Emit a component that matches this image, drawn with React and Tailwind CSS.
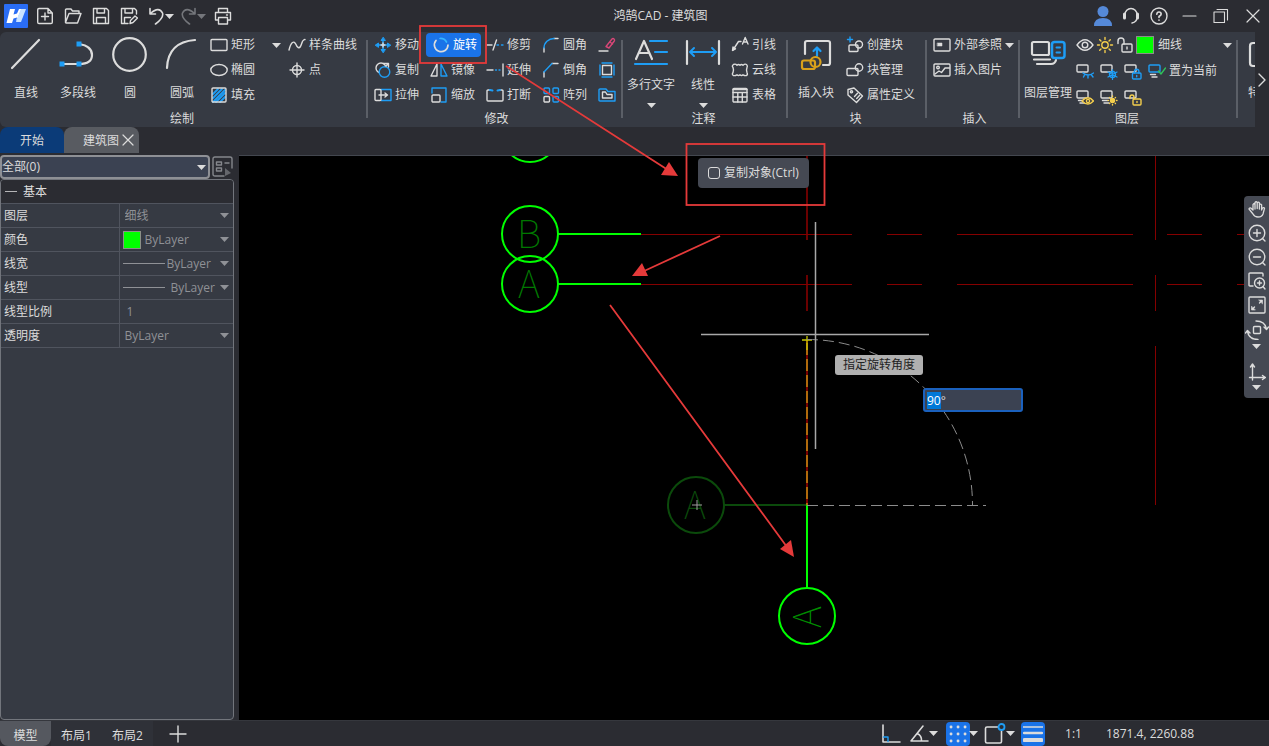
import React, { useEffect, useRef } from "react";

const W = "#dcdcdc";
const B = "#1e9df5";
const Y = "#f5cf4d";

/* ---------- small helpers ---------- */

function Svg({ w = 18, h = 18, children, className = "" }) {
  return (
    <svg width={w} height={h} viewBox={`0 0 ${w} ${h}`} fill="none" stroke={W} strokeWidth="1.4" strokeLinecap="round" strokeLinejoin="round" className={`shrink-0 ${className}`} aria-hidden="true">
      {children}
    </svg>
  );
}

function Caret({ className = "text-[#dcdcdc]" }) {
  return (
    <svg width="9" height="5" viewBox="0 0 9 5" fill="currentColor" className={`shrink-0 ${className}`} aria-hidden="true">
      <path d="M0 0h9L4.500 5z" />
    </svg>
  );
}

/* ---------- ribbon icons ---------- */

const icons = {
  rect: <Svg><rect x="1" y="3.500" width="16" height="11" rx="1" /></Svg>,
  ellipse: <Svg><ellipse cx="9" cy="9" rx="8.200" ry="5.500" /></Svg>,
  hatch: (
    <Svg>
      <path d="M3 8l5-5M3 12l9-9M3 16L15 4M6 16l9-9M10 16l5-5" stroke={B} strokeWidth="1.800" />
      <rect x="2" y="2" width="14" height="14" rx="1" />
    </Svg>
  ),
  spline: <Svg><path d="M1 14C3 6 6 4 8 8.500S12 13 13.500 8 16 4 17 3.500" /></Svg>,
  point: <Svg><circle cx="9" cy="9" r="4.500" /><path d="M9 2v14M2 9h14" /></Svg>,
  move: (
    <Svg>
      <path d="M9 3v12M3 9h12" stroke={B} strokeWidth="1.600" />
      <path d="M9 1.500L7 4.500h4zM9 16.500l-2-3h4zM1.500 9l3-2v4zM16.500 9l-3-2v4z" fill={B} stroke={B} strokeWidth="1" />
      <path d="M9 7v4M7 9h4" />
    </Svg>
  ),
  copy: (
    <Svg>
      <circle cx="7" cy="7" r="5" />
      <circle cx="10.500" cy="11" r="5.300" stroke={B} fill="#363a43" />
      <path d="M9 2.500h5.500V6M14.500 2.500L12 5" />
    </Svg>
  ),
  stretch: (
    <Svg>
      <path d="M7 3.500h10v11H7" stroke={B} />
      <rect x="1" y="3.500" width="6" height="11" rx="1" />
      <path d="M5 9h8M11 7l2.500 2-2.500 2" />
    </Svg>
  ),
  rotate: (
    <Svg>
      <path d="M4 4.500A6.800 6.800 0 1 0 16 9" strokeWidth="1.700" />
      <path d="M8 2.500A6.800 6.800 0 0 1 14.500 6" stroke="#35b4ff" strokeWidth="1.700" />
    </Svg>
  ),
  mirror: <Svg><path d="M7 3v12H1z" /><path d="M11 3v12h6z" stroke={B} /></Svg>,
  scale: (
    <Svg>
      <path d="M2 7V2h14v14h-5" stroke={B} />
      <rect x="2" y="9" width="8" height="7" rx="1" />
    </Svg>
  ),
  trim: <Svg><path d="M1 9h5M10.500 4L7 14" /><path d="M11 9h1.500M15.500 9H17" stroke={B} /></Svg>,
  extend: <Svg><path d="M1 9h6M17 3v12" /><path d="M9.500 9h1M13 9h1" stroke={B} /></Svg>,
  break: <Svg><path d="M4 4H2q-1 0-1 1v9q0 1 1 1h14q1 0 1-1V5q0-1-1-1h-2" /><path d="M4 4l2.500.500M14 4l-2.500.500" stroke={B} strokeWidth="2" /></Svg>,
  fillet: <Svg><path d="M2 16v-4M12 2.500h4" /><path d="M2 12A10 9.500 0 0 1 12 2.500" stroke={B} /></Svg>,
  chamfer: <Svg><path d="M2 16v-5M10 2.500h6" /><path d="M2 11l8-8.500" stroke={B} /></Svg>,
  array: (
    <Svg>
      <rect x="2" y="10.500" width="5.500" height="5.500" rx="1" />
      <g stroke={B}>
        <rect x="2" y="2" width="5.500" height="5.500" rx="1" />
        <rect x="11" y="2" width="5.500" height="5.500" rx="1" />
        <rect x="11" y="10.500" width="5.500" height="5.500" rx="1" />
      </g>
    </Svg>
  ),
  erase: (
    <Svg>
      <path d="M1 15h9" />
      <path d="M8 10.500l6-7.500q1-1 2 0t.300 2L11 12zM12 6l2.500 2" stroke="#d84677" />
    </Svg>
  ),
  explode: (
    <Svg>
      <rect x="4.500" y="4.500" width="9" height="9" />
      <path d="M4 2h10M4 16h10M2 4v10M16 4v10" stroke={B} />
    </Svg>
  ),
  offset: (
    <Svg>
      <path d="M2 3h6l2 2.500h7V15H2q-1 0-1-1V4q0-1 1-1z" stroke={B} />
      <path d="M4.500 6h3L9 8.500h5V12H4.500z" />
    </Svg>
  ),
  leader: (
    <Svg>
      <path d="M2 14l5.500-8.500H10" />
      <path d="M1.500 14.500L2 11l2.500 1.800z" fill={W} />
      <path d="M11.500 8l2.700-6.500L17 8M12.500 6H16" />
    </Svg>
  ),
  cloud: (
    <Svg>
      <path d="M2.500 3.500q2-1 3.500.700 1.500-1.500 3 0 1.500-1.500 3 0 2-1.700 3.500-.700 1.500 1.500.500 3-1 2.500 0 5 1 2-.500 3-1.500.500-3.500-.700-1.500 1.500-3 0-1.500 1.500-3 0-2 1.200-3.500.700Q.500 13.500 2 11.500q1-2.500 0-5Q.500 5 2.500 3.500z" />
    </Svg>
  ),
  table: <Svg><rect x="2" y="2.500" width="14" height="13.500" rx="1" /><path d="M2 6.500h14M2 11h14M6.800 6.500V16M11.300 6.500V16M2 3.500h14" /></Svg>,
  blockNew: (
    <Svg>
      <rect x="3" y="9" width="9" height="6.500" rx="1" />
      <circle cx="13" cy="8.500" r="3.500" />
      <path d="M4 1v5M1.500 3.500h5" stroke={B} />
    </Svg>
  ),
  block: <Svg><rect x="1" y="7.500" width="11" height="7" rx="1" /><circle cx="13" cy="6.500" r="3.700" /></Svg>,
  tag: (
    <Svg>
      <path d="M2 3.500L8 2l8.500 8-6 6.500L2 9z" />
      <circle cx="5.500" cy="5.800" r="1.100" />
      <path d="M8.500 10.500l3-3.300M10.700 12.500l3-3.300" />
    </Svg>
  ),
  xref: <Svg><rect x="1" y="3" width="16" height="12" rx="1" /><rect x="4.500" y="7" width="4.500" height="3" fill={W} strokeWidth=".5" /></Svg>,
  image: (
    <Svg>
      <rect x="1" y="3" width="16" height="12" rx="1" />
      <circle cx="5" cy="6.500" r="1.300" />
      <path d="M2 13l4-3 2.500 1.500L12 7h4.500" />
    </Svg>
  ),
};

/* ---------- large ribbon icons ---------- */

const bigIcons = {
  line: <Svg w={34} h={36}><path d="M3 31L30 3" strokeWidth="2.200" /></Svg>,
  polyline: (
    <Svg w={38} h={36}>
      <path d="M3 27h17q13 0 13-9T20 7" strokeWidth="2.200" />
      <path d="M.500 24.500h5v5h-5zM17.500 24.500h5v5h-5zM17.500 4.500h5v5h-5z" fill={B} stroke="none" />
    </Svg>
  ),
  circle: <Svg w={36} h={36}><circle cx="17.500" cy="17.500" r="16.300" strokeWidth="2.200" /></Svg>,
  arc: <Svg w={34} h={36}><path d="M2 31Q3 5 30 3" strokeWidth="2.200" /></Svg>,
  mtext: (
    <Svg w={36} h={28}>
      <path d="M3 20L11 2l8 18M6 14h10" strokeWidth="2.200" />
      <path d="M17 2h17M22 13h12M2 25h32" stroke={B} strokeWidth="2.200" />
    </Svg>
  ),
  linear: (
    <Svg w={36} h={28}>
      <path d="M2 2v23M34 2v23" strokeWidth="2.200" />
      <path d="M5 13h26M9 9l-4 4 4 4M27 9l4 4-4 4" stroke={B} strokeWidth="2" />
    </Svg>
  ),
  insert: (
    <Svg w={34} h={34}>
      <path d="M6 16V5q0-2 2-2h21q2 0 2 2v20q0 2-2 2h-5" strokeWidth="2.200" />
      <path d="M18 18v-8M14.500 13l3.500-3.500L21.500 13" stroke={B} strokeWidth="2.200" />
      <rect x="3" y="22.500" width="13" height="8.500" rx="2" stroke="#d9a11b" strokeWidth="2.200" />
      <circle cx="16.500" cy="24" r="5" stroke="#d9a11b" strokeWidth="2.200" />
    </Svg>
  ),
  layers: (
    <Svg w={36} h={36}>
      <rect x="2" y="5" width="17" height="13" rx="1.500" strokeWidth="2.200" />
      <path d="M4 22.500h16M7 27h14q4 0 5-4" strokeWidth="2.200" />
      <rect x="22" y="5" width="12.500" height="16" rx="2.500" stroke={B} strokeWidth="2.500" />
      <path d="M26.500 10.500h3.500M26.500 15.500h3.500" stroke={B} strokeWidth="2" />
    </Svg>
  ),
};

/* layer tools: the same sheet with a different badge */
function LayerIcon({ badge, color, stacked }) {
  const badges = {
    closed: <path d="M7 10q5 4 10.500 0M8.500 12l-1 2M12 12.500v2.500M15.500 12l1.500 2" />,
    snow: <><circle cx="12.500" cy="11.500" r="3" /><path d="M12.500 6.500v10M8 9l9 5M17 9l-9 5" strokeWidth="1.200" /></>,
    lock: <><rect x="8.500" y="10" width="8.500" height="6" rx="1" fill="#363a43" /><path d="M10.500 10V8.500a2.200 2.200 0 0 1 4.400 0V10M12.700 12.500v1.200" /></>,
    unlock: <><rect x="9" y="10" width="8" height="6" rx="1" fill="#363a43" /><path d="M10 10V8a2 2 0 0 0-4 0v1.500M13 12.500v1" /></>,
    eye: <><path d="M6 12q6-6.500 11.500 0-5.500 6-11.500 0z" fill="#363a43" /><circle cx="12" cy="12" r="1.600" /></>,
    sun: <><circle cx="12.500" cy="11.500" r="2" fill={Y} /><path d="M12.500 7v.500M12.500 15.500v.500M8 11.500h.500M16.500 11.500h.500M9.500 8.500l.300.300M15.200 14.200l.300.300M15.500 8.500l-.300.300M9.800 14.200l-.300.300" /></>,
    check: <path d="M10.500 8l2.500 3 4.500-6" stroke="#2fc25b" />,
  };
  return (
    <Svg>
      <rect x="1" y="3" width="11" height="7" rx="1" stroke={badge === "check" ? B : W} />
      {stacked && <path d="M2.500 12.500h5M4 15h5" />}
      <g stroke={color} transform="translate(0 1)">{badges[badge]}</g>
    </Svg>
  );
}

/* ---------- ribbon parts ---------- */

function Tool({ icon, label, active, caret }) {
  return (
    <button type="button" aria-label={label ? undefined : icon} className={`flex h-6 items-center gap-[3px] whitespace-nowrap ${active ? "-ml-1 rounded bg-[#1a73e8] pl-1.5 pr-1 text-white" : ""}`}>
      {icons[icon]}
      {label}
      {caret && <Caret />}
    </button>
  );
}

function ToolColumn({ tools, className = "" }) {
  return (
    <div className={`flex shrink-0 flex-col items-start gap-px ${className}`}>
      {tools.map((t) => <Tool key={t.icon} {...t} />)}
    </div>
  );
}

function BigTool({ icon, label, caret, className = "w-13" }) {
  return (
    <button type="button" className={`flex h-19 shrink-0 flex-col items-center whitespace-nowrap pt-1 ${className}`}>
      <span className={`flex items-center ${caret ? "h-8" : "h-9"}`}>{bigIcons[icon]}</span>
      <span className={caret ? "mt-1.5 leading-5" : "mt-2.5 leading-5"}>{label}</span>
      {caret && <Caret className="mt-2 text-[#dcdcdc]" />}
    </button>
  );
}

function Group({ title, children, className = "" }) {
  return (
    <section className={`relative flex shrink-0 flex-col ${className}`}>
      <div className="flex h-[78px] items-start pt-px">{children}</div>
      <h2 className="mt-px pr-1 text-center leading-4">{title}</h2>
      <span className="absolute right-0 top-2 h-[78px] w-0.5 bg-[#5b5f67]" />
    </section>
  );
}

function Ribbon() {
  return (
    <div className="flex h-[95px] overflow-hidden rounded-l-md bg-[#363a43]">
      <Group title="绘制" className="w-[368px]">
        <BigTool icon="line" label="直线" />
        <BigTool icon="polyline" label="多段线" />
        <BigTool icon="circle" label="圆" />
        <BigTool icon="arc" label="圆弧" />
        <ToolColumn className="ml-0.5 w-16" tools={[{ icon: "rect", label: "矩形" }, { icon: "ellipse", label: "椭圆" }, { icon: "hatch", label: "填充" }]} />
        <button type="button" aria-label="更多图形" className="-ml-0.5 flex h-6 w-4 items-center"><Caret /></button>
        <ToolColumn tools={[{ icon: "spline", label: "样条曲线" }, { icon: "point", label: "点" }]} />
      </Group>

      <Group title="修改" className="w-[255px] pl-1.5">
        <ToolColumn className="w-14" tools={[{ icon: "move", label: "移动" }, { icon: "copy", label: "复制" }, { icon: "stretch", label: "拉伸" }]} />
        <ToolColumn className="w-14" tools={[{ icon: "rotate", label: "旋转", active: true }, { icon: "mirror", label: "镜像" }, { icon: "scale", label: "缩放" }]} />
        <ToolColumn className="w-14" tools={[{ icon: "trim", label: "修剪" }, { icon: "extend", label: "延伸" }, { icon: "break", label: "打断" }]} />
        <ToolColumn className="w-14" tools={[{ icon: "fillet", label: "圆角" }, { icon: "chamfer", label: "倒角" }, { icon: "array", label: "阵列" }]} />
        <ToolColumn tools={[{ icon: "erase" }, { icon: "explode" }, { icon: "offset" }]} />
      </Group>

      <Group title="注释" className="w-[165px]">
        <BigTool icon="mtext" label="多行文字" caret className="w-14" />
        <BigTool icon="linear" label="线性" caret className="w-12" />
        <ToolColumn className="ml-1" tools={[{ icon: "leader", label: "引线" }, { icon: "cloud", label: "云线" }, { icon: "table", label: "表格" }]} />
      </Group>

      <Group title="块" className="w-[139px]">
        <BigTool icon="insert" label="插入块" className="w-14" />
        <ToolColumn className="ml-0.5" tools={[{ icon: "blockNew", label: "创建块" }, { icon: "block", label: "块管理" }, { icon: "tag", label: "属性定义" }]} />
      </Group>

      <Group title="插入" className="w-[93px] pl-1.5">
        <ToolColumn tools={[{ icon: "xref", label: "外部参照", caret: true }, { icon: "image", label: "插入图片" }]} />
      </Group>

      <Group title="图层" className="w-[218px]">
        <BigTool icon="layers" label="图层管理" className="w-14" />
        <div className="flex flex-1 flex-col gap-0.5 pr-1.5">
          <div className="flex h-6 items-center gap-0.5">
            <Svg><path d="M1 9q8-10.500 16 0-8 10.500-16 0z" /><circle cx="9" cy="9" r="2.800" /></Svg>
            <Svg><g stroke={Y}><circle cx="9" cy="9" r="3.200" /><path d="M9 1.500v2M9 14.500v2M1.500 9h2M14.500 9h2M3.700 3.700L5 5M13 13l1.300 1.300M3.700 14.300L5 13M13 5l1.300-1.300" /></g></Svg>
            <Svg><rect x="6" y="8" width="10" height="8" rx="1" /><path d="M8 8V5a3 3 0 0 0-6 0v2.500M11 11v2" /></Svg>
            <span className="size-[18px] shrink-0 border border-[#8b8f88] bg-[#00ff00]" />
            <div className="relative ml-0.5 flex min-w-0 flex-1 items-center">
              <select aria-label="当前图层" className="h-6 w-full appearance-none bg-transparent leading-6 outline-none"><option>细线</option></select>
              <Caret className="pointer-events-none absolute right-0 text-[#dcdcdc]" />
            </div>
          </div>
          <div className="flex h-6 items-center gap-1.5">
            <button type="button" aria-label="关闭图层"><LayerIcon badge="closed" color={B} /></button>
            <button type="button" aria-label="冻结图层"><LayerIcon badge="snow" color={B} /></button>
            <button type="button" aria-label="锁定图层"><LayerIcon badge="lock" color={B} /></button>
            <button type="button" className="flex items-center gap-[3px] whitespace-nowrap"><LayerIcon badge="check" stacked />置为当前</button>
          </div>
          <div className="flex h-6 items-center gap-1.5">
            <button type="button" aria-label="打开图层"><LayerIcon badge="eye" color={Y} stacked /></button>
            <button type="button" aria-label="解冻图层"><LayerIcon badge="sun" color={Y} stacked /></button>
            <button type="button" aria-label="解锁图层"><LayerIcon badge="unlock" color={Y} /></button>
          </div>
        </div>
      </Group>

      <div className="flex min-w-0 flex-1 overflow-hidden pl-2.5 pt-px">
        <button type="button" className="flex h-19 shrink-0 flex-col items-start whitespace-nowrap pt-1">
          <span className="flex h-9 items-center"><Svg w={34} h={30}><rect x="2" y="3" width="28" height="23" rx="3" strokeWidth="2.200" /></Svg></span>
          <span className="mt-2.5 leading-5">特性</span>
        </button>
      </div>
      <button type="button" aria-label="向右滚动" className="flex w-3.5 shrink-0 items-center justify-center bg-[#2b2c32]">
        <Svg w={8} h={16}><path d="M1 2l6 6-6 6" /></Svg>
      </button>
    </div>
  );
}

/* ---------- title bar ---------- */

function TitleBar() {
  return (
    <header className="flex h-8 items-center bg-[#2b2c32] pl-1">
      <div className="flex items-center gap-2.5">
        <svg width="24" height="24" viewBox="0 0 24 24" className="-mr-0.5" aria-hidden="true">
          <rect width="24" height="24" rx="1" fill="#2a6df5" />
          <path d="M6 5h5L9.500 10.500 13 9.500 15 5h2.500L12 18l1-4.500-3.500 1L8 19H2.500z" fill="#fff" />
          <path d="M17 5h5l-5 13h-5l2.500-7z" fill="#c9e3ff" />
        </svg>
        <button type="button" aria-label="新建"><Svg><path d="M12 1.500H3q-1.300 0-1.300 1.300v12.400q0 1.300 1.300 1.300h12q1.300 0 1.300-1.300V6zM12 1.500V6h4.300M9 6v7M5.500 9.500h7" /></Svg></button>
        <button type="button" aria-label="打开"><Svg><path d="M1.500 15.500V3q0-1 1-1H7l1.500 2H15v2.500M1.500 15.500L5 6.500h12l-3.500 9.500H2z" /></Svg></button>
        <button type="button" aria-label="保存"><Svg><path d="M1.500 1.500h13l2 2v13h-15zM5 1.500v4.500h7.500V1.500M4.500 16.500V10.500h9v6" /></Svg></button>
        <button type="button" aria-label="另存为"><Svg><path d="M8 16.500H1.500v-15h13l2 2V7M5 1.500v4.500h7.500V1.500M4.500 16V10.500h6M10 16.500l.500-3L15 9l2.500 2-4.500 4.500z" /></Svg></button>
        <button type="button" aria-label="撤销" className="flex items-center"><Svg><path d="M2 1.500V7h5.500M2.500 6.500Q11-1 14.500 6q1.500 4.500-7 11" strokeWidth="1.600" /></Svg><Caret className="-ml-px text-[#dcdcdc]" /></button>
        <button type="button" aria-label="重做" className="-ml-1 flex items-center"><Svg><g stroke="#74767b"><path d="M15 1.500V7H9.500M14.500 6.500Q6-1 2.500 6 1 10.500 9.500 17" strokeWidth="1.600" /></g></Svg><Caret className="-ml-px text-[#74767b]" /></button>
        <button type="button" aria-label="打印" className="-ml-0.5"><Svg><path d="M4.500 5.500V1.500h9v4M4.500 13H1.500V5.500h15V13h-3M4.500 10.500h9v6.500h-9zM12.500 8h1" /></Svg></button>
      </div>
      <h1 className="flex-1 text-center">鸿鹄CAD - 建筑图</h1>
      <div className="flex items-center">
        <button type="button" aria-label="用户" className="w-7"><Svg w={20} h={22} className="mx-auto"><g fill="#5589d8" stroke="none"><circle cx="10" cy="6.500" r="5.500" /><path d="M1 21q0-8 9-8t9 8z" /></g></Svg></button>
        <button type="button" aria-label="客服" className="w-7"><Svg className="mx-auto"><path d="M3 9V7.500a6 6 0 0 1 12 0V10q0 5-5 6" /><path d="M2.500 7v4M15.500 7v4" strokeWidth="3" /></Svg></button>
        <button type="button" aria-label="帮助" className="w-7"><Svg className="mx-auto"><circle cx="9" cy="9" r="8" /><path d="M6.800 7.200Q7 5 9 5t2.200 2Q11.200 8.200 9 9.500V10.500M9 13v.200" strokeWidth="1.600" /></Svg></button>
        <button type="button" aria-label="最小化" className="w-8"><Svg className="mx-auto"><path d="M3 9h13" strokeWidth="1.100" /></Svg></button>
        <button type="button" aria-label="还原" className="w-8"><Svg className="mx-auto"><path d="M2 5h10.500v10.500H2zM5 2.500h10.500V13" strokeWidth="1.100" /></Svg></button>
        <button type="button" aria-label="关闭" className="w-8"><Svg className="mx-auto"><path d="M3 3l12 12M15 3L3 15" strokeWidth="1.200" /></Svg></button>
      </div>
    </header>
  );
}

/* ---------- property panel ---------- */

const properties = [
  { id: "layer", label: "图层", value: "细线" },
  { id: "color", label: "颜色", value: "ByLayer", sample: <span className="mr-0.5 size-[18px] shrink-0 border border-[#8b8f88] bg-[#00ff00]" /> },
  { id: "weight", label: "线宽", value: "ByLayer", sample: <span className="h-px w-[42px] shrink-0 bg-[#8f9196]" /> },
  { id: "ltype", label: "线型", value: "ByLayer", sample: <span className="mr-1 h-px w-[42px] shrink-0 bg-[#8f9196]" /> },
  { id: "ltscale", label: "线型比例", value: "1", input: true },
  { id: "alpha", label: "透明度", value: "ByLayer" },
];

function PropertyPanel() {
  return (
    <aside className="flex w-[239px] shrink-0 flex-col bg-[#2b2c32] pr-1">
      <div className="flex h-6 items-center gap-0.5 pr-0.5">
        <div className="relative flex h-6 flex-1 items-center rounded-sm border-2 border-[#8e9095] bg-[#3b4252]">
          <select aria-label="选择集" className="h-5 w-full appearance-none bg-transparent leading-5 outline-none"><option>全部(0)</option></select>
          <Caret className="pointer-events-none absolute right-0.5 text-[#dcdcdc]" />
        </div>
        <button type="button" aria-label="快速选择">
          <Svg w={21} h={22}>
            <g stroke="#85878c">
              <path d="M12 20H3q-2 0-2-2V3q0-2 2-2h15q2 0 2 2v9" />
              <path d="M4.500 6h5v3h-5zM4.500 12h5v3h-5zM13 7h4" />
              <path d="M13 12l6 5-6 3z" fill="#65676c" stroke="none" />
            </g>
          </Svg>
        </button>
      </div>
      <div className="mr-px flex-1 overflow-hidden rounded border border-[#72757c] bg-[#363a43]">
        <h2 className="flex h-[23px] items-center gap-1.5 bg-[#2b2c32] pl-1"><span className="h-px w-3 bg-[#b5b5b7]" />基本</h2>
        <table className="w-full table-fixed border-collapse">
          <tbody>
            {properties.map((p) => (
              <tr key={p.id} className="h-6 border-y border-[#50545e]">
                <th scope="row" className="w-[118px] border-r border-[#50545e] p-0 pl-[3px] text-left font-normal"><label htmlFor={p.id}>{p.label}</label></th>
                <td className="p-0 text-[#8f9196]">
                  <div className="relative flex h-[23px] items-center pl-[3px] pr-1">
                    {p.sample}
                    {p.input ? (
                      <input id={p.id} defaultValue={p.value} className="h-5 w-full bg-transparent pl-1 outline-none" />
                    ) : (
                      <select id={p.id} className="h-5 min-w-0 flex-1 appearance-none bg-transparent pl-0.5 leading-5 outline-none"><option>{p.value}</option></select>
                    )}
                    {!p.input && <Caret className="pointer-events-none absolute right-1 text-[#8f9196]" />}
                  </div>
                </td>
              </tr>
            ))}
          </tbody>
        </table>
      </div>
    </aside>
  );
}

/* ---------- drawing ---------- */

function AxisMark({ x, y, letter, color = "#00ff00", text = "#007800", turn = 0 }) {
  return (
    <g transform={`translate(${x} ${y}) rotate(${turn})`}>
      <circle r="28" stroke={color} strokeWidth="2" />
      <path d="M28 0h83" stroke={color} strokeWidth="2" />
      <text x="-1" y="14" textAnchor="middle" fill={text} stroke="none" fontSize="38" fontWeight="100" fontFamily="'Noto Sans CJK SC', Lato, sans-serif">{letter}</text>
    </g>
  );
}

function Drawing() {
  return (
    <svg className="absolute inset-0 size-full" fill="none" aria-hidden="true">
      <g stroke="#850000" strokeWidth="1">
        {[78.5, 128.5].map((y) => (
          <path key={y} d={`M402 ${y}H613M648 ${y}h35M718 ${y}h176M928 ${y}h35M998 ${y}h32`} />
        ))}
        <path d="M568 0v84M568 119v36" strokeWidth="1.600" />
        <path d="M916.500 0v84M916.500 119v36M916.500 190v159" />
      </g>
      <circle cx="291" cy="-22" r="28" stroke="#00ff00" strokeWidth="2" />
      <AxisMark x={291} y={78} letter="B" />
      <AxisMark x={291} y={128} letter="A" />
      <AxisMark x={457} y={349} letter="A" color="#0b4a0b" text="#0b4a0b" />
      <path d="M453 349h10M458 344v10" stroke="#a0a0a0" />
      <AxisMark x={568} y={460} letter="A" text="#008c00" turn={-90} />
      <path d="M568 184v165" stroke="#7a0000" strokeWidth="2" />
      <path d="M568 187v162" stroke="#b06a0c" strokeWidth="2" strokeDasharray="12 4" />
      <path d="M568 180v14M563 184h10" stroke="#c8c800" strokeWidth="1.300" />
      <g stroke="#8c8c8c" strokeDasharray="11 5">
        <path d="M568 349.500h179" />
        <path d="M568 183.500A165 165 0 0 1 733.500 349" />
      </g>
      <path d="M462 178.500h228M576.500 66v227" stroke="#a8a8a8" strokeWidth="1.500" />
    </svg>
  );
}

function ViewTools() {
  return (
    <div className="absolute right-0 top-10 flex w-[25px] flex-col items-center gap-1.5 rounded-l bg-[#454953] pb-2 pt-1">
      <button type="button" aria-label="平移"><Svg><path d="M5 10V4.500q1-1.500 2 0V9 2.500q1.200-1.500 2.200 0V8.500 2.800q1.200-1.300 2.200 0V9 4.500q1.200-1 2.200.300V10l.800-2q1.500-1 2.100.300L15 14q-1 3-5 3-3.500 0-5-3L1 9q.300-1.500 2-.800z" strokeWidth="1.300" /></Svg></button>
      <button type="button" aria-label="放大"><Svg><circle cx="9" cy="9" r="7.800" /><path d="M14.500 14.500L17 17M9 5.500v7M5.500 9h7" /></Svg></button>
      <button type="button" aria-label="缩小"><Svg><circle cx="9" cy="9" r="7.800" /><path d="M14.500 14.500L17 17M5.500 9h7" /></Svg></button>
      <button type="button" aria-label="窗口缩放"><Svg><path d="M5 14H2q-1 0-1-1V2q0-1 1-1h12q1 0 1 1v2" /><circle cx="11.500" cy="11" r="5" /><path d="M15.200 14.700L17 17M11.500 9v4M9.500 11h4" /></Svg></button>
      <button type="button" aria-label="全部缩放"><Svg><rect x="1" y="1" width="16" height="16" rx="1" /><path d="M11 4h3.500v3.500zM3.500 10.500V14H7z" fill={W} strokeWidth=".6" /><path d="M11.500 7l2-2M4.500 13l2-2" /></Svg></button>
      <button type="button" aria-label="旋转视图" className="flex flex-col items-center gap-1">
        <Svg w={24} h={20}><rect x="8.500" y="6.500" width="7" height="7" rx="1" /><path d="M11 1q9 0 10.500 8M19 7l2.500 2.500L23.500 7M13 19.500q-9 0-10.500-8M.500 13l2-2.500L5 13" /></Svg>
        <Caret />
      </button>
      <button type="button" aria-label="坐标系" className="mt-2 flex flex-col items-center gap-1">
        <Svg><path d="M4.500 17V1.500M2.500 4l2-3 2 3M1.500 14.500h15.500M14.500 12.500l3 2-3 2" /></Svg>
        <Caret />
      </button>
    </div>
  );
}

function Canvas() {
  const angle = useRef(null);

  useEffect(() => {
    angle.current.focus();
    angle.current.setSelectionRange(0, 2);
  }, []);

  return (
    <main className="relative min-w-0 flex-1 overflow-hidden border-t border-[#43474f] bg-black">
      <Drawing />
      <label className="absolute left-[459px] top-0.5 flex h-[30px] items-center gap-1 whitespace-nowrap rounded bg-[#454953] px-2.5">
        <input type="checkbox" className="size-3 appearance-none rounded-[3px] border border-[#dcdcdc]" />
        复制对象(Ctrl)
      </label>
      <label htmlFor="angle" className="absolute left-[596px] top-[199px] h-5 whitespace-nowrap rounded-[3px] bg-[#b0b0b0] px-2 leading-5 text-[#222]">指定旋转角度</label>
      <input id="angle" ref={angle} defaultValue="90°" className="absolute left-[684px] top-[232px] h-6 w-[100px] rounded-[3px] border-2 border-[#1b61bd] bg-[#3b4252] px-0.5 outline-none selection:bg-[#0078d7] selection:text-white" />
      <ViewTools />
    </main>
  );
}

/* red call-outs over the window */
function Callouts() {
  return (
    <svg className="pointer-events-none absolute inset-0 size-full" fill="none" stroke="#e53a3a" strokeWidth="1.800" aria-hidden="true">
      <rect x="420" y="26" width="66" height="37" />
      <rect x="686.500" y="144" width="138" height="61" />
      <path d="M506 66l162 104M720 236l-78 36M610 305l177 242" />
      <g fill="#e53a3a" stroke="none">
        <path d="M678 176l-17-1 8-13z" />
        <path d="M632 276l10-13 6 13z" />
        <path d="M794 557l-14-8 11-9z" />
      </g>
    </svg>
  );
}

function StatusBar() {
  return (
    <footer className="flex h-[26px] items-center border-t border-[#35373d] bg-[#2b2c32] pr-[75px]">
      <button type="button" className="h-full w-[51px] rounded-b-lg bg-[#55585f] pt-1">模型</button>
      <button type="button" className="h-full w-[51px] bg-[#2f3138] pt-1">布局1</button>
      <button type="button" className="h-full w-[51px] bg-[#2f3138] pt-1">布局2</button>
      <button type="button" aria-label="新建布局" className="ml-4"><Svg><path d="M9 1v16M1 9h16" /></Svg></button>
      <div className="ml-auto flex items-center gap-2">
        <button type="button" aria-label="正交"><Svg w={20} h={20}><path d="M2 1v17h17" strokeWidth="1.600" /><path d="M2.500 13H7v4.500" stroke={B} /></Svg></button>
        <button type="button" aria-label="极轴" className="flex items-center"><Svg w={20} h={20}><path d="M14 2L2 17h17M8 9.500q5 2 4.500 7.500" strokeWidth="1.600" /></Svg><Caret /></button>
        <button type="button" aria-label="栅格" className="flex items-center">
          <span className="flex size-6 items-center justify-center rounded bg-[#1a73e8]">
            <Svg w={20} h={20}><path d="M3 3h.100M10 3h.100M17 3h.100M3 10h.100M10 10h.100M17 10h.100M3 17h.100M10 17h.100M17 17h.100" strokeWidth="2.800" /></Svg>
          </span>
          <Caret className="-ml-px text-[#dcdcdc]" />
        </button>
        <button type="button" aria-label="对象捕捉" className="-ml-0.5 flex items-center"><Svg w={22} h={22}><path d="M13.500 4H3q-1.500 0-1.500 1.500v13Q1.500 20 3 20h13q1.500 0 1.500-1.500V8" strokeWidth="1.600" /><circle cx="17.500" cy="4" r="3" stroke={B} strokeWidth="1.800" /></Svg><Caret /></button>
        <button type="button" aria-label="线宽" className="-ml-0.5 flex size-6 items-center justify-center rounded bg-[#1a73e8]">
          <Svg w={20} h={20}><path d="M0 3h20" /><path d="M1 9h18" strokeWidth="2.500" /><path d="M1.500 16h17" strokeWidth="4" /></Svg>
        </button>
      </div>
      <span className="ml-5 pt-px">1:1</span>
      <span className="ml-6 pt-px">1871.4, 2260.88</span>
    </footer>
  );
}

export default function App() {
  return (
    <div className="relative flex min-h-screen flex-col bg-[#2b2c32] font-['Open_Sans','Noto_Sans_CJK_SC',sans-serif] text-[12px] text-[#dcdcdc]">
      <TitleBar />
      <Ribbon />
      <nav className="flex h-7 items-start">
        <button type="button" className="h-[26px] w-16 rounded-t-lg bg-[#0b3b78] pt-0.5">开始</button>
        <div className="flex h-[26px] w-[75px] items-center justify-end gap-0.5 rounded-t-lg bg-[#585b61] pr-1">
          <button type="button" className="pt-0.5">建筑图</button>
          <button type="button" aria-label="关闭标签"><Svg w={14} h={14}><path d="M2 2l10 10M12 2L2 12" strokeWidth="1.200" /></Svg></button>
        </div>
      </nav>
      <div className="flex flex-1">
        <PropertyPanel />
        <Canvas />
      </div>
      <StatusBar />
      <Callouts />
    </div>
  );
}
